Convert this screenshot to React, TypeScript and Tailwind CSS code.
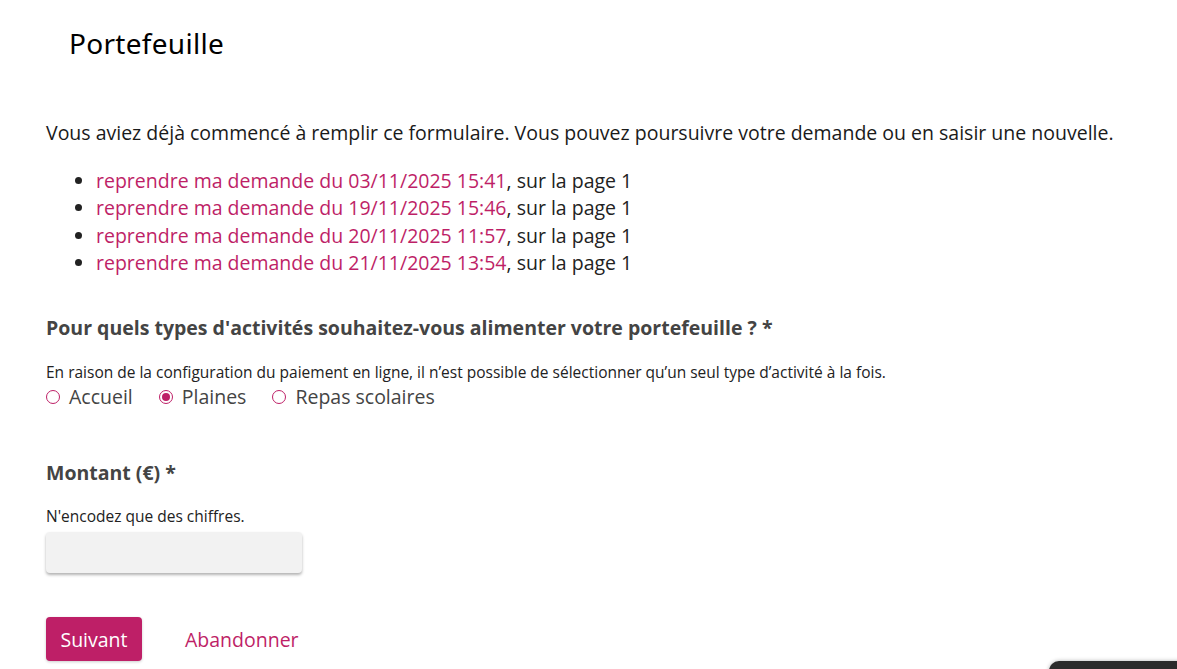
const links = [
  "03/11/2025 15:41",
  "19/11/2025 15:46",
  "20/11/2025 11:57",
  "21/11/2025 13:54",
];

const options = [
  { label: "Accueil", checked: false },
  { label: "Plaines", checked: true },
  { label: "Repas scolaires", checked: false },
];

const Radio = ({ checked }: { checked: boolean }) => (
  <span className="inline-flex h-[14px] w-[14px] items-center justify-center rounded-full border border-[#be1f67] bg-white">
    {checked && <span className="h-[8px] w-[8px] rounded-full bg-[#be1f67]" />}
  </span>
);

export default function App() {
  return (
    <div className="relative h-[669px] w-full overflow-hidden bg-white font-['Open_Sans',sans-serif] text-[#222]">
      <h1 className="pl-[69px] pt-[24px] font-['Noto_Sans',sans-serif] text-[28px] font-normal leading-[38px] tracking-[0.3px] text-black">
        Portefeuille
      </h1>

      <div className="px-[46px] pt-[57px]">
        <p className="text-[19.5px] leading-[28px] text-[#1a1a1a]">
          Vous aviez déjà commencé à remplir ce formulaire. Vous pouvez poursuivre votre demande ou en saisir une nouvelle.
        </p>

        <ul className="mt-[20px] list-disc pl-[50px] text-[19.5px] leading-[27.3px]">
          {links.map((d) => (
            <li key={d}>
              <a className="text-[#be1f67]">reprendre ma demande du {d}</a>, sur la page 1
            </li>
          ))}
        </ul>

        <h2 className="mt-[39px] text-[19.5px] font-bold leading-[26px] text-[#444]">
          Pour quels types d'activités souhaitez-vous alimenter votre portefeuille ? *
        </h2>
        <p className="mt-[21px] text-[15.5px] leading-[20px] text-[#222]">
          En raison de la configuration du paiement en ligne, il n’est possible de sélectionner qu’un seul type d’activité à la fois.
        </p>
        <div className="mt-[2px] flex items-center gap-[26px] text-[19.5px] leading-[26px] text-[#444]">
          {options.map((o) => (
            <label key={o.label} className="flex items-center gap-[9px]">
              <Radio checked={o.checked} />
              {o.label}
            </label>
          ))}
        </div>

        <h2 className="mt-[50px] text-[19.5px] font-bold leading-[26px] text-[#444]">Montant (€) *</h2>
        <p className="mt-[20px] text-[15.5px] leading-[20px] text-[#222]">N'encodez que des chiffres.</p>
        <input
          type="text"
          className="mt-[6px] h-[41px] w-[256px] rounded-[4px] bg-[#f2f2f2] shadow-[0_2px_3px_rgba(0,0,0,0.3)] outline-none"
        />

        <div className="mt-[44px] flex items-center">
          <button className="h-[44px] w-[96px] rounded-[4px] bg-[#be1f67] text-[19.5px] text-white shadow-[0_1px_3px_rgba(0,0,0,0.2)]">
            Suivant
          </button>
          <a className="ml-[43px] text-[19.5px] text-[#be1f67]">Abandonner</a>
        </div>
      </div>

      <div className="absolute left-[1049px] top-[661px] h-[30px] w-[160px] rounded-t-[10px] bg-[#2b2b2b] shadow-[0_0_4px_rgba(0,0,0,0.3)]" />
    </div>
  );
}
